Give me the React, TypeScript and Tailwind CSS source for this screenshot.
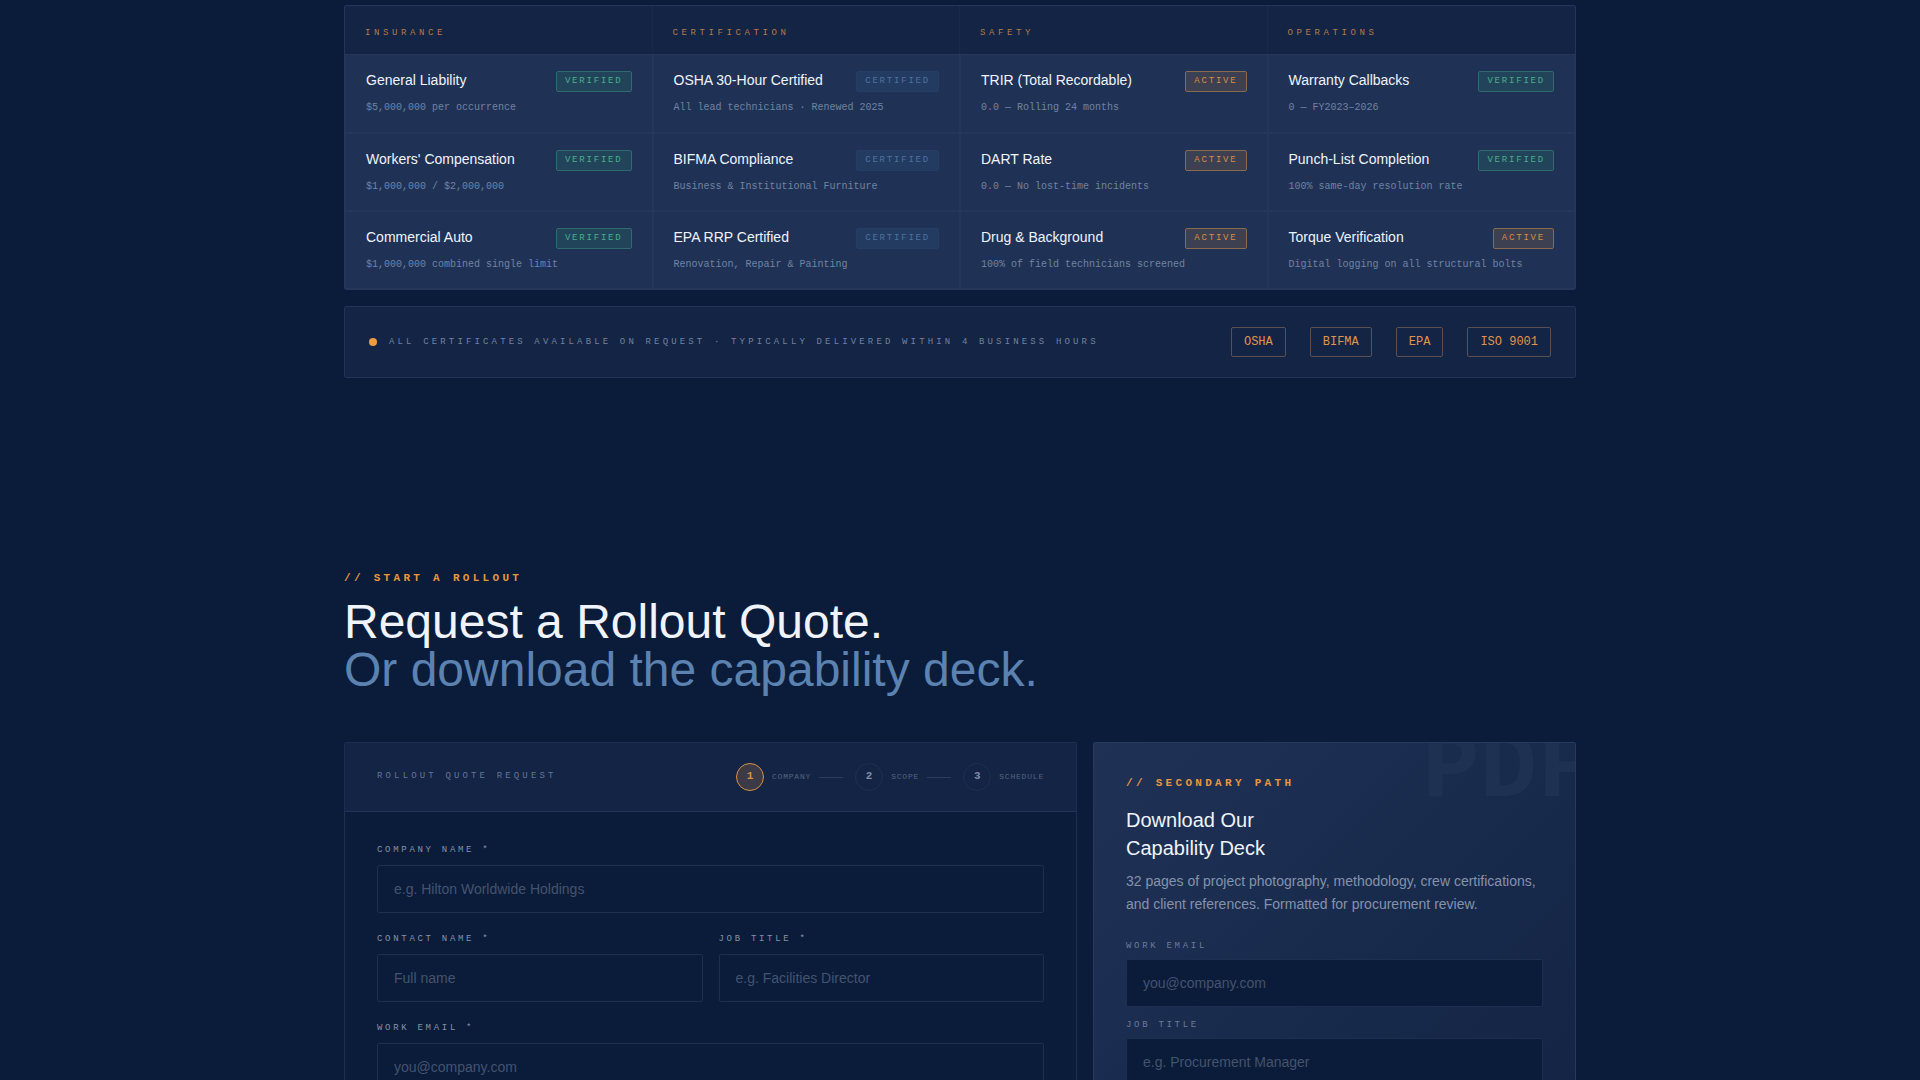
import React from 'react';
import clsx from 'clsx';

type Status = 'VERIFIED' | 'CERTIFIED' | 'ACTIVE';

interface Credential {
    title: string;
    detail: string;
    status: Status;
}

const columns = ['INSURANCE', 'CERTIFICATION', 'SAFETY', 'OPERATIONS'];

const rows: Credential[][] = [
    [
        { title: 'General Liability', detail: '$5,000,000 per occurrence', status: 'VERIFIED' },
        { title: 'OSHA 30-Hour Certified', detail: 'All lead technicians · Renewed 2025', status: 'CERTIFIED' },
        { title: 'TRIR (Total Recordable)', detail: '0.0 — Rolling 24 months', status: 'ACTIVE' },
        { title: 'Warranty Callbacks', detail: '0 — FY2023–2026', status: 'VERIFIED' },
    ],
    [
        { title: "Workers' Compensation", detail: '$1,000,000 / $2,000,000', status: 'VERIFIED' },
        { title: 'BIFMA Compliance', detail: 'Business & Institutional Furniture', status: 'CERTIFIED' },
        { title: 'DART Rate', detail: '0.0 — No lost-time incidents', status: 'ACTIVE' },
        { title: 'Punch-List Completion', detail: '100% same-day resolution rate', status: 'VERIFIED' },
    ],
    [
        { title: 'Commercial Auto', detail: '$1,000,000 combined single limit', status: 'VERIFIED' },
        { title: 'EPA RRP Certified', detail: 'Renovation, Repair & Painting', status: 'CERTIFIED' },
        { title: 'Drug & Background', detail: '100% of field technicians screened', status: 'ACTIVE' },
        { title: 'Torque Verification', detail: 'Digital logging on all structural bolts', status: 'ACTIVE' },
    ],
];

const badgeStyles: Record<Status, string> = {
    VERIFIED: 'text-[#4aae8a] bg-[#22445a] border-[#2f6a6c]',
    CERTIFIED: 'text-[#4d719f] bg-[#243b61] border-[#263e65]',
    ACTIVE: 'text-[#d68d42] bg-[#3d4050] border-[#8a6a4c]',
};

const standards = ['OSHA', 'BIFMA', 'EPA', 'ISO 9001'];
const steps = ['COMPANY', 'SCOPE', 'SCHEDULE'];

const mono = "font-['Liberation_Mono',monospace]";

const CredentialCell = ({ title, detail, status }: Credential) => (
    <td className="border border-[#243759] bg-[#1f3256] px-5 pt-[15px] align-top">
        <div className="flex items-start justify-between">
            {/* long details run under the badge */}
            <div className="w-0 whitespace-nowrap">
                <div className="text-sm leading-5 text-[#f0f4fa]">{title}</div>
                <div className={clsx(mono, 'mt-2.5 text-[10px] leading-[15px] text-[#7282a0]')}>{detail}</div>
            </div>
            <span
                className={clsx(
                    mono,
                    'mt-px rounded-xs border px-2 py-[3px] text-[9px] leading-[13px] tracking-[0.2em]',
                    badgeStyles[status]
                )}
            >
                {status}
            </span>
        </div>
    </td>
);

const CredentialTable = () => (
    <div className="overflow-hidden rounded-xs border border-[#243759]">
        <table className="w-full table-fixed border-separate border-spacing-0">
            <thead>
                <tr>
                    {columns.map((column) => (
                        <th
                            key={column}
                            scope="col"
                            className={clsx(
                                mono,
                                'h-12 border-r border-r-[#182a4c] bg-[#132444] px-5 pt-2 text-left text-[9px] font-normal tracking-[0.4em] text-[#b27b4a] last:border-r-0'
                            )}
                        >
                            {column}
                        </th>
                    ))}
                </tr>
            </thead>
            <tbody>
                {rows.map((row, index) => (
                    <tr key={index} className="h-[78px] first:h-[79px]">
                        {row.map((item) => (
                            <CredentialCell key={item.title} {...item} />
                        ))}
                    </tr>
                ))}
            </tbody>
        </table>
    </div>
);

const StandardsBar = () => (
    <div className="mt-4 flex items-center justify-between rounded-xs border border-[#213456] bg-[#132444] px-6 py-5">
        <div className="flex items-center gap-3">
            <span className="size-2 rounded-full bg-[#f09a3e]" />
            <span className={clsx(mono, 'text-[9px] leading-[14px] tracking-[0.35em] text-[#7282a0]')}>
                ALL CERTIFICATES AVAILABLE ON REQUEST · TYPICALLY DELIVERED WITHIN 4 BUSINESS HOURS
            </span>
        </div>
        <div className="flex items-center gap-6">
            {standards.map((name) => (
                <span
                    key={name}
                    className={clsx(mono, 'rounded-xs border border-[#5a5052] px-3 py-[5px] text-xs leading-[18px] text-[#e0954a]')}
                >
                    {name}
                </span>
            ))}
        </div>
    </div>
);

const Eyebrow = ({ children }: { children: React.ReactNode }) => (
    <p className={clsx(mono, 'text-[11px] leading-4 font-bold tracking-[0.3em] text-[#e8963e]')}>{children}</p>
);

interface FieldProps {
    id: string;
    label: string;
    placeholder: string;
    type?: string;
    compact?: boolean;
}

const Field = ({ id, label, placeholder, type = 'text', compact = false }: FieldProps) => (
    <div className="min-w-0">
        <label
            htmlFor={id}
            className={clsx(
                mono,
                'block text-[9px] leading-[13px] tracking-[0.3em]',
                compact ? 'mb-1.5 text-[#6a7b9b]' : 'mb-2 text-[#8592ab]'
            )}
        >
            {label}
        </label>
        <input
            id={id}
            type={type}
            placeholder={placeholder}
            className="block h-12 w-full rounded-xs border border-[#1c2f51] bg-[#0a1c3a] px-4 text-sm text-[#f0f4fa] placeholder:text-[#44536e] focus:outline-none"
        />
    </div>
);

const Stepper = () => (
    <ol className="flex items-center gap-3">
        {steps.map((step, index) => (
            <li key={step} className={clsx(mono, 'flex items-center gap-2')}>
                <span
                    className={clsx(
                        'flex size-7 items-center justify-center rounded-full border pb-0.5 text-[11px] font-bold',
                        index === 0 ? 'border-[#d98f42] bg-[#3d3a48] text-[#d98f42]' : 'border-[#1e3153] text-[#7d8ba6]'
                    )}
                >
                    {index + 1}
                </span>
                <span className="text-[8px] tracking-[0.1em] text-[#53647f]">{step}</span>
                {index < steps.length - 1 && <span className="h-px w-6 bg-[#2a3d60]" />}
            </li>
        ))}
    </ol>
);

const QuoteForm = () => (
    <form className="overflow-hidden rounded-xs border border-[#1c2f51]">
        <div className="flex items-center justify-between border-b border-[#213456] bg-[#132444] px-8 py-5">
            <h3 className={clsx(mono, 'pb-0.5 text-[9px] leading-[14px] tracking-[0.35em] text-[#64759a]')}>
                ROLLOUT QUOTE REQUEST
            </h3>
            <Stepper />
        </div>
        <div className="flex flex-col gap-5 p-8">
            <Field id="company" label="COMPANY NAME *" placeholder="e.g. Hilton Worldwide Holdings" />
            <div className="grid grid-cols-2 gap-4">
                <Field id="contact" label="CONTACT NAME *" placeholder="Full name" />
                <Field id="job-title" label="JOB TITLE *" placeholder="e.g. Facilities Director" />
            </div>
            <Field id="email" type="email" label="WORK EMAIL *" placeholder="you@company.com" />
        </div>
    </form>
);

const DeckForm = () => (
    <form className="relative overflow-hidden rounded-xs border border-[#263a5e] bg-linear-135 from-[#1f3256] to-[#132444] p-8">
        <span
            aria-hidden="true"
            className={clsx(mono, 'pointer-events-none absolute -top-5 -right-5 text-8xl leading-none font-bold text-[#1e3153]')}
        >
            PDF
        </span>
        <Eyebrow>// SECONDARY PATH</Eyebrow>
        <h3 className="mt-[15px] text-xl leading-7 text-[#f0f4fa]">
            Download Our
            <br />
            Capability Deck
        </h3>
        <p className="mt-2 text-sm leading-[23px] text-[#8592ab]">
            32 pages of project photography, methodology, crew certifications, and client references. Formatted for
            procurement review.
        </p>
        <div className="mt-6 flex flex-col gap-3">
            <Field id="deck-email" type="email" label="WORK EMAIL" placeholder="you@company.com" compact />
            <Field id="deck-title" label="JOB TITLE" placeholder="e.g. Procurement Manager" compact />
        </div>
    </form>
);

export default function App() {
    return (
        <main className="h-screen overflow-hidden bg-[#0a1c3a] font-['Liberation_Sans',Arial,sans-serif]">
            <div className="mx-auto max-w-7xl px-6">
                <section className="pt-[5px] pb-24">
                    <CredentialTable />
                    <StandardsBar />
                </section>
                <section className="pt-24">
                    <Eyebrow>// START A ROLLOUT</Eyebrow>
                    <h2 className="mt-3 text-5xl leading-none text-[#f0f4fa]">
                        Request a Rollout Quote.
                        <br />
                        <span className="text-[#5b82b0]">Or download the capability deck.</span>
                    </h2>
                    <div className="mt-12 grid grid-cols-[733fr_483fr] gap-4">
                        <QuoteForm />
                        <DeckForm />
                    </div>
                </section>
            </div>
        </main>
    );
}
